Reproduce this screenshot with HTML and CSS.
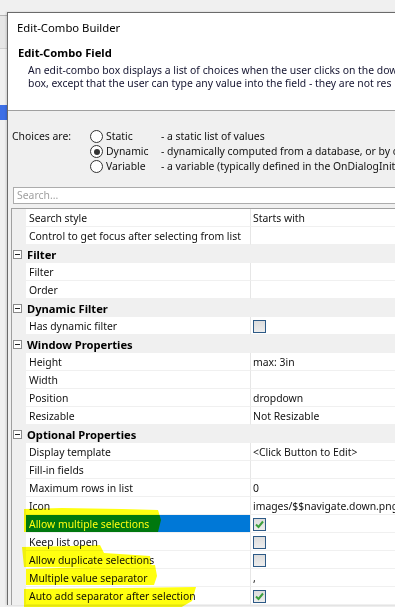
FILE: index.html
```html
<!DOCTYPE html>
<html lang="en">
<head>
  <meta charset="UTF-8">
  <title>Edit-Combo Builder</title>
  <link rel="stylesheet" href="styles.css">
</head>
<body>
  <div class="desk">
    <!-- window behind the dialog -->
    <div class="behind">
      <div class="behind-top"></div>
      <div class="behind-bar"></div>
      <div class="behind-gap"></div>
      <div class="behind-sel"></div>
    </div>

    <div class="dialog">
      <div class="head">
        <div class="caption">Edit-Combo Builder</div>
        <div class="field-title">Edit-Combo Field</div>
        <p class="field-desc">An edit-combo box displays a list of choices when the user clicks on the down<br>box, except that the user can type any value into the field - they are not res</p>
      </div>

      <div class="content">
        <div class="choices">
          <span class="choices-label">Choices are:</span>
          <div class="choice-list">
            <div class="choice"><span class="radio"></span><span class="choice-name">Static</span><span class="choice-desc">- a static list of values</span></div>
            <div class="choice"><span class="radio on"></span><span class="choice-name">Dynamic</span><span class="choice-desc">- dynamically computed from a database, or by c</span></div>
            <div class="choice"><span class="radio"></span><span class="choice-name">Variable</span><span class="choice-desc">- a variable (typically defined in the OnDialogInitia</span></div>
          </div>
        </div>

        <div class="search">Search...</div>

        <div class="grid">
          <div class="row"><div class="gutter"></div><div class="name">Search style</div><div class="value">Starts with</div></div>
          <div class="row"><div class="gutter"></div><div class="name">Control to get focus after selecting from list</div><div class="value"></div></div>

          <div class="group"><span class="minus"></span>Filter</div>
          <div class="row"><div class="gutter"></div><div class="name">Filter</div><div class="value"></div></div>
          <div class="row"><div class="gutter"></div><div class="name">Order</div><div class="value"></div></div>

          <div class="group"><span class="minus"></span>Dynamic Filter</div>
          <div class="row"><div class="gutter"></div><div class="name">Has dynamic filter</div><div class="value"><span class="check"></span></div></div>

          <div class="group"><span class="minus"></span>Window Properties</div>
          <div class="row"><div class="gutter"></div><div class="name">Height</div><div class="value">max: 3in</div></div>
          <div class="row"><div class="gutter"></div><div class="name">Width</div><div class="value"></div></div>
          <div class="row"><div class="gutter"></div><div class="name">Position</div><div class="value">dropdown</div></div>
          <div class="row"><div class="gutter"></div><div class="name">Resizable</div><div class="value">Not Resizable</div></div>

          <div class="group"><span class="minus"></span>Optional Properties</div>
          <div class="row"><div class="gutter"></div><div class="name">Display template</div><div class="value">&lt;Click Button to Edit&gt;</div></div>
          <div class="row"><div class="gutter"></div><div class="name">Fill-in fields</div><div class="value"></div></div>
          <div class="row"><div class="gutter"></div><div class="name">Maximum rows in list</div><div class="value">0</div></div>
          <div class="row"><div class="gutter"></div><div class="name">Icon</div><div class="value">images/$$navigate.down.png</div></div>
          <div class="row selected"><div class="gutter"></div><div class="name">Allow multiple selections</div><div class="value"><span class="check">
            <svg width="11" height="11" viewBox="0 0 11 11"><path d="M2 5.5 L4.5 8 L9 2.5" fill="none" stroke="#3c9f3c" stroke-width="2"/></svg></span></div></div>
          <div class="row"><div class="gutter"></div><div class="name">Keep list open</div><div class="value"><span class="check"></span></div></div>
          <div class="row"><div class="gutter"></div><div class="name">Allow duplicate selections</div><div class="value"><span class="check"></span></div></div>
          <div class="row"><div class="gutter"></div><div class="name">Multiple value separator</div><div class="value">,</div></div>
          <div class="row"><div class="gutter"></div><div class="name">Auto add separator after selection</div><div class="value"><span class="check">
            <svg width="11" height="11" viewBox="0 0 11 11"><path d="M2 5.5 L4.5 8 L9 2.5" fill="none" stroke="#3c9f3c" stroke-width="2"/></svg></span></div></div>

          <!-- highlighter marks drawn over the list -->
          <svg class="marker" width="390" height="400">
            <path d="M12 300 L50 299 L110 300 L146 301 L149 311 L146 323 L12 323 Z"/>
            <path d="M10 338 L60 337 L88 336 L92 344 L138 347 L140 359 L12 358 Z"/>
            <path d="M14 360 L80 358 L143 356 L145 367 L142 376 L14 376 Z"/>
            <path d="M12 380 L110 379 L184 378 L180 392 L168 399 L12 399 Z"/>
          </svg>
        </div>
      </div>
    </div>
  </div>
</body>
</html>
```

FILE: styles.css
```css
body {
    margin: 0;
    overflow: hidden;
    background: #f0f0f0;
    font-family: "Noto Sans", "Liberation Sans", sans-serif;
    font-size: 10.4px;
    color: #111;
}

.desk {
    display: flex;
    align-items: flex-start;
    height: 607px;
}

/* the app window peeking out on the left */
.behind {
    width: 7px;
    flex: none;
    display: flex;
    flex-direction: column;
}
.behind-top {
    height: 15px;
    border-bottom: 1px solid #b5b5b5;
}
.behind-bar {
    height: 32px;
    background: #e6e6e6;
    border-bottom: 1px solid #d0d0d0;
}
.behind-gap {
    height: 56px;
}
.behind-sel {
    height: 15px;
    background: #3d6fe6;
}

.dialog {
    width: 620px;
    flex: none;
    margin-top: 12px;
    border-top: 1px solid #6a6a6a;
    border-left: 1px solid #6a6a6a;
    background: #f0f0f0;
    box-shadow: -1px 0 2px rgba(0, 0, 0, 0.15);
}

.head {
    height: 97px;
    background: #fff;
    border-bottom: 1px solid #a0a0a0;
    padding-left: 9px;
    white-space: nowrap;
}
.caption {
    height: 26px;
    padding-top: 7px;
    line-height: 16px;
    font-size: 11.3px;
    color: #000;
}
.field-title {
    line-height: 14px;
    margin-left: 1px;
    font-weight: 700;
    font-size: 11.2px;
    color: #000;
}
.field-desc {
    margin: 4px 0 0 11px;
    line-height: 13px;
    color: #141430;
}

.content {
    padding-top: 18px;
}

.choices {
    display: flex;
    padding-left: 4px;
    line-height: 15px;
    white-space: nowrap;
}
.choices-label {
    width: 78px;
}
.choice {
    display: flex;
    align-items: center;
}
.radio {
    width: 11px;
    height: 11px;
    border: 1px solid #333;
    border-radius: 50%;
    background: #fff;
    margin-right: 3px;
    display: flex;
    align-items: center;
    justify-content: center;
}
.radio.on::after {
    content: "";
    width: 6px;
    height: 6px;
    border-radius: 50%;
    background: #333;
}
.choice-name {
    width: 55px;
}

.search {
    margin: 13px 0 0 5px;
    height: 15px;
    border: 1px solid #acacac;
    background: #fff;
    line-height: 15px;
    padding-left: 3px;
    color: #a0a0a0;
}

.grid {
    position: relative;
    margin: 4px 0 0 3px;
    border-top: 1px solid #a0a0a0;
    border-left: 1px solid #a0a0a0;
    background: #fff;
}

.row {
    display: grid;
    grid-template-columns: 14px 224px 1fr;
    height: 18px;
}
.gutter {
    background: #f0f0f0;
}
.name {
    padding: 1px 0 0 3px;
    line-height: 16px;
    border-bottom: 1px solid #f0f0f0;
    white-space: nowrap;
    overflow: hidden;
}
.value {
    padding: 1px 0 0 2px;
    line-height: 16px;
    border-left: 1px solid #e6e6e6;
    border-bottom: 1px solid #f0f0f0;
    white-space: nowrap;
    display: flex;
    align-items: center;
}
.row.selected .name {
    background: #0078d7;
    color: #fff;
}

.group {
    display: flex;
    align-items: center;
    height: 18px;
    padding-top: 1px;
    box-sizing: border-box;
    background: #f0f0f0;
    font-weight: 700;
    font-size: 11.2px;
    color: #000;
}
.minus {
    width: 7px;
    height: 7px;
    margin: 0 5px 0 1px;
    border: 1px solid #8a8a8a;
    background: #fff;
    display: flex;
    align-items: center;
    justify-content: center;
}
.minus::after {
    content: "";
    width: 5px;
    height: 1px;
    background: #222;
}

.check {
    width: 11px;
    height: 11px;
    border: 1px solid #2d5a86;
    background: linear-gradient(#dcdcdc, #ededed);
    display: flex;
    align-items: center;
    justify-content: center;
}

.marker {
    position: absolute;
    left: 0;
    top: 0;
    pointer-events: none;
    mix-blend-mode: multiply;
    fill: #ffff10;
}
```
